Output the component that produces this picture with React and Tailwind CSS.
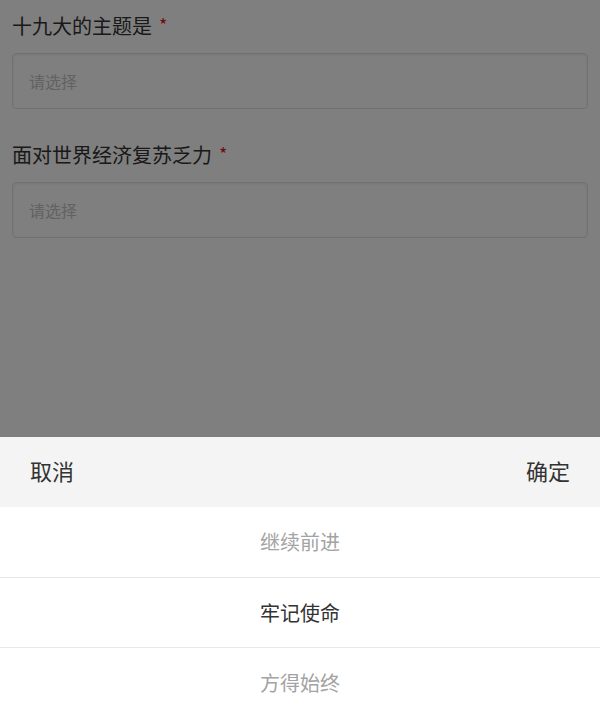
import React from "react";

const font = { fontFamily: '"Noto Sans CJK SC", "Noto Sans", sans-serif' };

function Field({ label }) {
  return (
    <div className="mb-[31px]">
      <div className="flex items-start h-[30px] leading-[30px] text-[20px] text-[#333]">
        <span>{label}</span>
        <span className="ml-[7px] text-[18px] leading-[26px] text-[#e4131b]">*</span>
      </div>
      <div className="mt-3 h-[56px] rounded border border-[#e3e3e3] shadow-[inset_0_1px_3px_rgba(0,0,0,0.08)] flex items-center px-4 text-[16px] text-[#c4c4c4]">
        请选择
      </div>
    </div>
  );
}

export default function App() {
  return (
    <div className="relative min-h-[728px] bg-white" style={font}>
      <div className="px-3 pt-[11px]">
        <Field label="十九大的主题是" />
        <Field label="面对世界经济复苏乏力" />
      </div>
      <div className="fixed inset-0 bg-black/50" />
      <div className="fixed left-0 right-0 bottom-0 h-[291px] bg-white">
        <div className="h-[70px] pb-[3px] bg-[#f4f4f4] flex items-center justify-between px-[30px] text-[22px] text-[#333]">
          <span>取消</span>
          <span>确定</span>
        </div>
        <div className="h-[70px] flex items-center justify-center text-[20px] text-[#a3a3a3]">继续前进</div>
        <div className="h-[70px] border-t border-[#e8e8e8] flex items-center justify-center text-[20px] text-[#333]">牢记使命</div>
        <div className="h-[70px] border-t border-[#e8e8e8] flex items-center justify-center text-[20px] text-[#a3a3a3]">方得始终</div>
      </div>
    </div>
  );
}
